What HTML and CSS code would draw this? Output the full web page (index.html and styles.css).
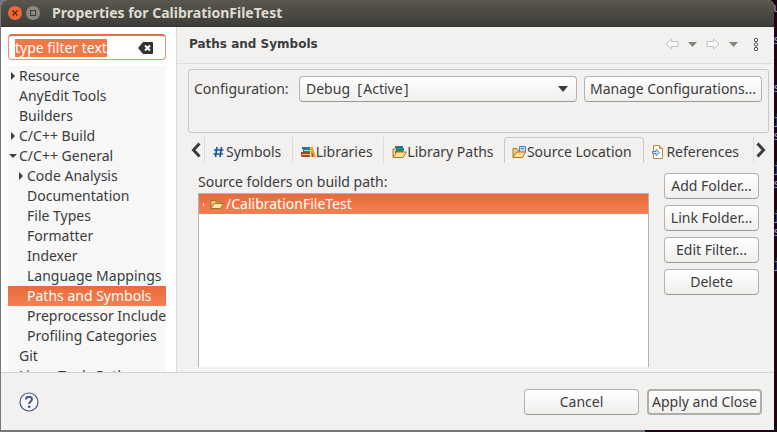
FILE: index.html
```
<!DOCTYPE html>
<html lang="en">
<head>
  <meta charset="utf-8">
  <meta name="viewport" content="width=device-width, initial-scale=1.0">
  <title>Properties for CalibrationFileTest</title>
  <link rel="stylesheet" href="styles.css">
</head>
<body>
  <!-- terminal behind the dialog -->
  <pre class="terminal" aria-hidden="true">u

s


s

j
s

j
s

j
s

j</pre>
  <div class="window">
    <header class="titlebar">
      <button class="win-button win-close" aria-label="Close">
        <svg width="14" height="14" viewBox="0 0 14 14"><path d="M4.5 4.5l5 5M9.5 4.5l-5 5" stroke="#5a2413" stroke-width="1.3"/></svg>
      </button>
      <button class="win-button" aria-label="Maximize">
        <svg width="14" height="14" viewBox="0 0 14 14"><rect x="4.5" y="4.5" width="5" height="5" fill="none" stroke="#3c3b37"/></svg>
      </button>
      <h1>Properties for CalibrationFileTest</h1>
    </header>

    <div class="content">
      <nav class="sidebar">
        <div class="filter">
          <input type="text" id="filter" class="filter-input" value="type filter text" aria-label="Filter">
          <button class="filter-clear" aria-label="Clear">
            <svg width="15" height="12" viewBox="0 0 15 12"><path d="M5 0h9a1 1 0 0 1 1 1v10a1 1 0 0 1-1 1H5L0 6z" fill="#2e3436"/><path d="M7 3.500l5 5M12 3.500l-5 5" stroke="#fff" stroke-width="2"/></svg>
          </button>
        </div>
        <ul class="tree">
          <li class="closed"><a href="#">Resource</a></li>
          <li><a href="#">AnyEdit Tools</a></li>
          <li><a href="#">Builders</a></li>
          <li class="closed"><a href="#">C/C++ Build</a></li>
          <li class="open"><a href="#">C/C++ General</a>
            <ul>
              <li class="closed"><a href="#">Code Analysis</a></li>
              <li><a href="#">Documentation</a></li>
              <li><a href="#">File Types</a></li>
              <li><a href="#">Formatter</a></li>
              <li><a href="#">Indexer</a></li>
              <li><a href="#">Language Mappings</a></li>
              <li><a href="#" class="selected">Paths and Symbols</a></li>
              <li><a href="#">Preprocessor Include</a></li>
              <li><a href="#">Profiling Categories</a></li>
            </ul>
          </li>
          <li><a href="#">Git</a></li>
          <li><a href="#">Linux Tools Path</a></li>
        </ul>
      </nav>

      <main class="page">
        <div class="page-header">
          <h2>Paths and Symbols</h2>
          <div class="toolbar">
            <button aria-label="Back"><svg width="14" height="12" viewBox="0 0 14 12"><path d="M6.500 1v2.500h6.500v5H6.500V11L1 6z" fill="#f8f8f7" stroke="#c3c2c0"/></svg></button>
            <button aria-label="Back history"><svg width="9" height="5" viewBox="0 0 9 5"><path d="M0 0h9L4.500 5z" fill="#858380"/></svg></button>
            <button aria-label="Forward"><svg width="14" height="12" viewBox="0 0 14 12"><path d="M7.500 1v2.500H1v5h6.500V11L13 6z" fill="#f8f8f7" stroke="#c3c2c0"/></svg></button>
            <button aria-label="Forward history"><svg width="9" height="5" viewBox="0 0 9 5"><path d="M0 0h9L4.500 5z" fill="#858380"/></svg></button>
            <button class="menu" aria-label="Menu"><svg width="6" height="15" viewBox="0 0 6 15"><g fill="#fff" stroke="#4a4a4a"><circle cx="3" cy="3" r="1.700"/><circle cx="3" cy="7.500" r="1.700"/><circle cx="3" cy="12" r="1.700"/></g></svg></button>
          </div>
        </div>

        <div class="config">
          <label for="configuration">Configuration:</label>
          <div class="select">
            <select id="configuration">
              <option>Debug&nbsp; [&#8202;Active&#8202;]</option>
              <option>Release</option>
            </select>
            <svg class="select-arrow" width="10" height="6" viewBox="0 0 10 6"><path d="M0 0h10L5 6z" fill="#3c3c3c"/></svg>
          </div>
          <button class="btn">Manage Configurations...</button>
        </div>

        <div class="tabs">
          <button class="tab-scroll" aria-label="Previous tab"><svg width="10" height="16" viewBox="0 0 10 16"><path d="M8.500 1.500L2.500 8l6 6.500" fill="none" stroke="#3c3c3c" stroke-width="3"/></svg></button>
          <button class="tab">
            <svg width="11" height="12" viewBox="0 0 11 12"><path d="M4 1L2.500 11M8.500 1L7 11M1 4h9.500M.5 8H10" stroke="#1f5a9a" stroke-width="1.700"/></svg>
            Symbols
          </button>
          <button class="tab snug">
            <svg width="15" height="12" viewBox="0 0 15 12"><path d="M1 1h8v2H1z" fill="#2a6fa5"/><path d="M2 3h7v3H2z" fill="#169268"/><path d="M3 4.500h6" stroke="#a6e0bd"/><path d="M0 6h9v5H1L0 10z" fill="#a34a24"/><path d="M1 8.500h8" stroke="#f0cba0"/><path d="M9 1.500L11.500.5 15 11h-5z" fill="#eca528"/><path d="M11 7l1 4" stroke="#8b5510"/></svg>
            Libraries
          </button>
          <button class="tab snug">
            <svg width="15" height="12" viewBox="0 0 15 12"><path d="M1 11V3h3" fill="#f4d27c" stroke="#b07522"/><path d="M3 0h8v2H3z" fill="#2a6fa5"/><path d="M4 2h8v3H4z" fill="#169268"/><path d="M3 5h8v2H3z" fill="#a34a24"/><path d="M1 11.500L4.500 6h10l-3.500 5.500z" fill="#fbe39c" stroke="#b07522"/></svg>
            Library Paths
          </button>
          <button class="tab snug active">
            <svg width="15" height="12" viewBox="0 0 15 12"><path d="M1 11V2.500h4l1 2h6V7" fill="#f4d27c" stroke="#b07522"/><path d="M7.500.5h6v6h-6z" fill="#b9d0f0" stroke="#5682bd"/><path d="M9 2.500h3" stroke="#5682bd"/><path d="M1 11.500L4.500 6h9L10.500 11.500z" fill="#fbe39c" stroke="#b07522"/></svg>
            Source Location
          </button>
          <button class="tab snug">
            <svg width="12" height="14" viewBox="0 0 12 14"><path d="M1.500.5h6l3 3v10h-9z" fill="#fff" stroke="#b98d38"/><path d="M7.500.5v3h3" fill="#f2d68c" stroke="#b98d38"/><path d="M.5 6.500H4V4.500l3.500 3L4 10.500v-2H.5z" fill="#d9e7f8" stroke="#587daf"/></svg>
            References
          </button>
          <button class="tab-scroll next" aria-label="Next tab"><svg width="10" height="16" viewBox="0 0 10 16"><path d="M1.500 1.500l6 6.500-6 6.500" fill="none" stroke="#3c3c3c" stroke-width="3"/></svg></button>
        </div>

        <div class="source">
          <div class="folders">
            <h3 id="folders-label">Source folders on build path:</h3>
            <ul class="folder-list" aria-labelledby="folders-label">
              <li>
                <svg width="14" height="10" viewBox="0 0 14 10"><path d="M1 9V1.500h4l1 1.500h5v2" fill="#f4d27c" stroke="#a96b20"/><path d="M1 9.500L4 4.500h9.500L10.500 9.500z" fill="#fbe7a8" stroke="#a96b20"/></svg>
                /CalibrationFileTest
              </li>
            </ul>
          </div>
          <div class="actions">
            <button class="btn">Add Folder...</button>
            <button class="btn">Link Folder...</button>
            <button class="btn">Edit Filter...</button>
            <button class="btn">Delete</button>
          </div>
        </div>
      </main>
    </div>

    <footer class="footer">
      <button class="help" aria-label="Help">
        <svg width="20" height="20" viewBox="0 0 20 20"><circle cx="10" cy="10" r="9" fill="#f7f7f9" stroke="#45557c" stroke-width="1.200"/><path d="M7 7.500C7 3.800 13 3.900 13 7.300c0 2.300-2.800 2.300-2.800 4.700" fill="none" stroke="#45557c" stroke-width="2"/><circle cx="10.200" cy="14.700" r="1.300" fill="#45557c"/></svg>
      </button>
      <button class="btn">Cancel</button>
      <button class="btn default">Apply and Close</button>
    </footer>
  </div>

  <script>
    // start with the filter text selected, like the real dialog
    const filter = document.getElementById("filter");
    filter.focus();
    filter.select();
  </script>
</body>
</html>
```
FILE: styles.css
```
* {
  box-sizing: border-box;
}
body {
  margin: 0;
  height: 100vh;
  padding: 0 3px 2px 1px;
  overflow: hidden;
  background: linear-gradient(to right, #77767a 83%, #1f0418 83%);
  font-family: "Noto Sans", sans-serif;
  font-size: 14px;
  line-height: 20px;
  color: #3c3c3c;
}
button, input, select {
  font: inherit;
  color: inherit;
}
button {
  padding: 0;
  border: none;
  background: none;
}
svg {
  display: block;
  flex: none;
}
h1, h2, h3, ul {
  margin: 0;
  padding: 0;
}
.terminal {
  position: absolute;
  top: 0;
  right: 0;
  width: 4px;
  margin: 0;
  overflow: hidden;
  font-family: "DejaVu Sans Mono", monospace;
  font-size: 13px;
  line-height: 16px;
  color: #8f9cc0;
}
.window {
  position: relative;
  display: flex;
  flex-direction: column;
  height: 100%;
  background-color: #f2f1f0;
  border-radius: 6px 6px 0 0;
  overflow: hidden;
}

/* title bar */
.titlebar {
  display: flex;
  align-items: center;
  gap: 4px;
  height: 27px;
  padding-left: 7px;
  background: linear-gradient(#59574e, #3e3d39);
  border-bottom: 1px solid #33322e;
}
.titlebar h1 {
  margin-left: 8px;
  font-size: 14px;
  font-weight: 700;
  color: #dfdbd2;
}
.win-button {
  width: 14px;
  height: 14px;
  border-radius: 50%;
  background-color: #8a8981;
}
.win-close {
  background-color: #ee6639;
}

.content {
  display: flex;
  flex: 1;
  min-height: 0;
}

/* category tree */
.sidebar {
  display: flex;
  flex-direction: column;
  gap: 6px;
  width: 175px;
  padding: 7px 10px 0 7px;
  background-color: #fff;
}
.filter {
  display: flex;
  align-items: center;
  height: 26px;
  padding: 0 12px 0 6px;
  border: 1px solid #e8956f;
  border-top: 2px solid #e07345;
  border-radius: 4px;
}
.filter-input {
  flex: 1;
  min-width: 0;
  height: 18px;
  padding: 0;
  border: none;
  outline: none;
  background: none;
}
.filter-input::selection {
  background-color: #f07746;
  color: #fff;
}
.tree {
  flex: 1;
  min-height: 0;
  overflow: hidden;
  background-color: #f7f7f7;
}
.tree ul {
  padding: 0;
}
.tree li {
  list-style: none;
}
.tree a {
  display: flex;
  align-items: center;
  height: 20px;
  white-space: nowrap;
  color: #3c3c3c;
  text-decoration: none;
}
.tree a::before {
  content: "";
  flex: none;
  width: 9px;
  height: 8px;
  margin-right: 2px;
}
.tree ul a {
  padding-left: 8px;
}
.tree .closed > a::before {
  background-color: #3c3c3c;
  clip-path: polygon(3px 0, 7px 4px, 3px 8px);
}
.tree .open > a::before {
  background-color: #3c3c3c;
  clip-path: polygon(1px 2px, 9px 2px, 5px 6px);
}
.tree .selected {
  background: linear-gradient(#e96a3b, #f58152);
  color: #fff;
}

/* right-hand page */
.page {
  display: flex;
  flex-direction: column;
  flex: 1;
  min-width: 0;
  border-left: 1px solid #dcdad8;
}
.page-header {
  display: flex;
  align-items: center;
  justify-content: space-between;
  height: 37px;
  padding: 0 15px 2px 12px;
  border-bottom: 1px solid #e0dfdd;
}
.page-header h2 {
  font-family: "DejaVu Sans", sans-serif;
  font-size: 12px;
  font-weight: 700;
}
.toolbar {
  display: flex;
  align-items: center;
  gap: 9px;
}
.toolbar .menu {
  margin-left: 6px;
}
.config {
  display: flex;
  align-items: flex-start;
  gap: 7px;
  height: 64px;
  margin: 5px 5px 0 11px;
  padding: 6px 6px 6px 5px;
  border: 1px solid #c9c7c5;
  border-radius: 3px;
}
.config label {
  width: 98px;
  line-height: 26px;
}
.config .btn {
  width: 178px;
}
.select {
  position: relative;
  flex: 1;
}
.select select {
  display: block;
  width: 100%;
  height: 26px;
  padding: 0 30px 0 6px;
  appearance: none;
}
.select-arrow {
  position: absolute;
  top: 10px;
  right: 9px;
  pointer-events: none;
}
.btn, .select select {
  border: 1px solid #b5b3b0;
  border-bottom-color: #9c9a97;
  border-radius: 4px;
  background: linear-gradient(#fff, #f0efee);
}
.btn {
  height: 26px;
  line-height: 22px;
  white-space: nowrap;
}

/* tabs */
.tabs {
  display: grid;
  grid-template-columns: 16px 88fr 92fr 121fr 141fr 109fr 16px;
  height: 26px;
  margin: 4px 5px 0 11px;
}
.tab {
  display: flex;
  align-items: center;
  gap: 2px;
  padding: 4px 0 0 8px;
  border-left: 1px solid #dddbd9;
  white-space: nowrap;
}
.tab.snug {
  gap: 0;
}
.tab.active {
  padding: 2px 0 0 7px;
  border: 1px solid #c9c7c5;
  border-bottom: none;
  border-radius: 4px 4px 0 0;
}
.tab.active + .tab {
  gap: 2px;
  border-left: none;
}
.tab-scroll {
  display: flex;
  align-items: center;
  padding-left: 3px;
}
.tab-scroll.next {
  padding-left: 2px;
  border-left: 1px solid #dddbd9;
}

/* source location tab */
.source {
  display: flex;
  flex: 1;
  gap: 15px;
  min-height: 0;
  padding: 9px 15px 5px 21px;
}
.folders {
  display: flex;
  flex-direction: column;
  flex: 1;
  gap: 1px;
}
.folders h3 {
  font-size: 14px;
  font-weight: 400;
}
.folder-list {
  flex: 1;
  border: 1px solid #b5b3b0;
  border-bottom: none;
  background-color: #fff;
}
.folder-list li {
  display: flex;
  align-items: center;
  gap: 2px;
  height: 20px;
  padding-left: 4px;
  background: linear-gradient(#e96a3b, #f58152);
  color: #fff;
}
.folder-list li::before {
  content: "";
  width: 1px;
  height: 3px;
  margin-right: 4px;
  background-color: #fff;
}
.actions {
  display: grid;
  grid-auto-rows: 26px;
  gap: 6px;
  width: 95px;
  padding-top: 1px;
}

/* bottom button bar */
.footer {
  display: flex;
  align-items: center;
  gap: 8px;
  height: 58px;
  padding: 0 12px 0 18px;
  border-top: 1px solid #d6d4d2;
}
.footer .btn {
  width: 115px;
}
.footer .default {
  border: 2px solid #b0aeab;
}
.help {
  margin-right: auto;
}
```
